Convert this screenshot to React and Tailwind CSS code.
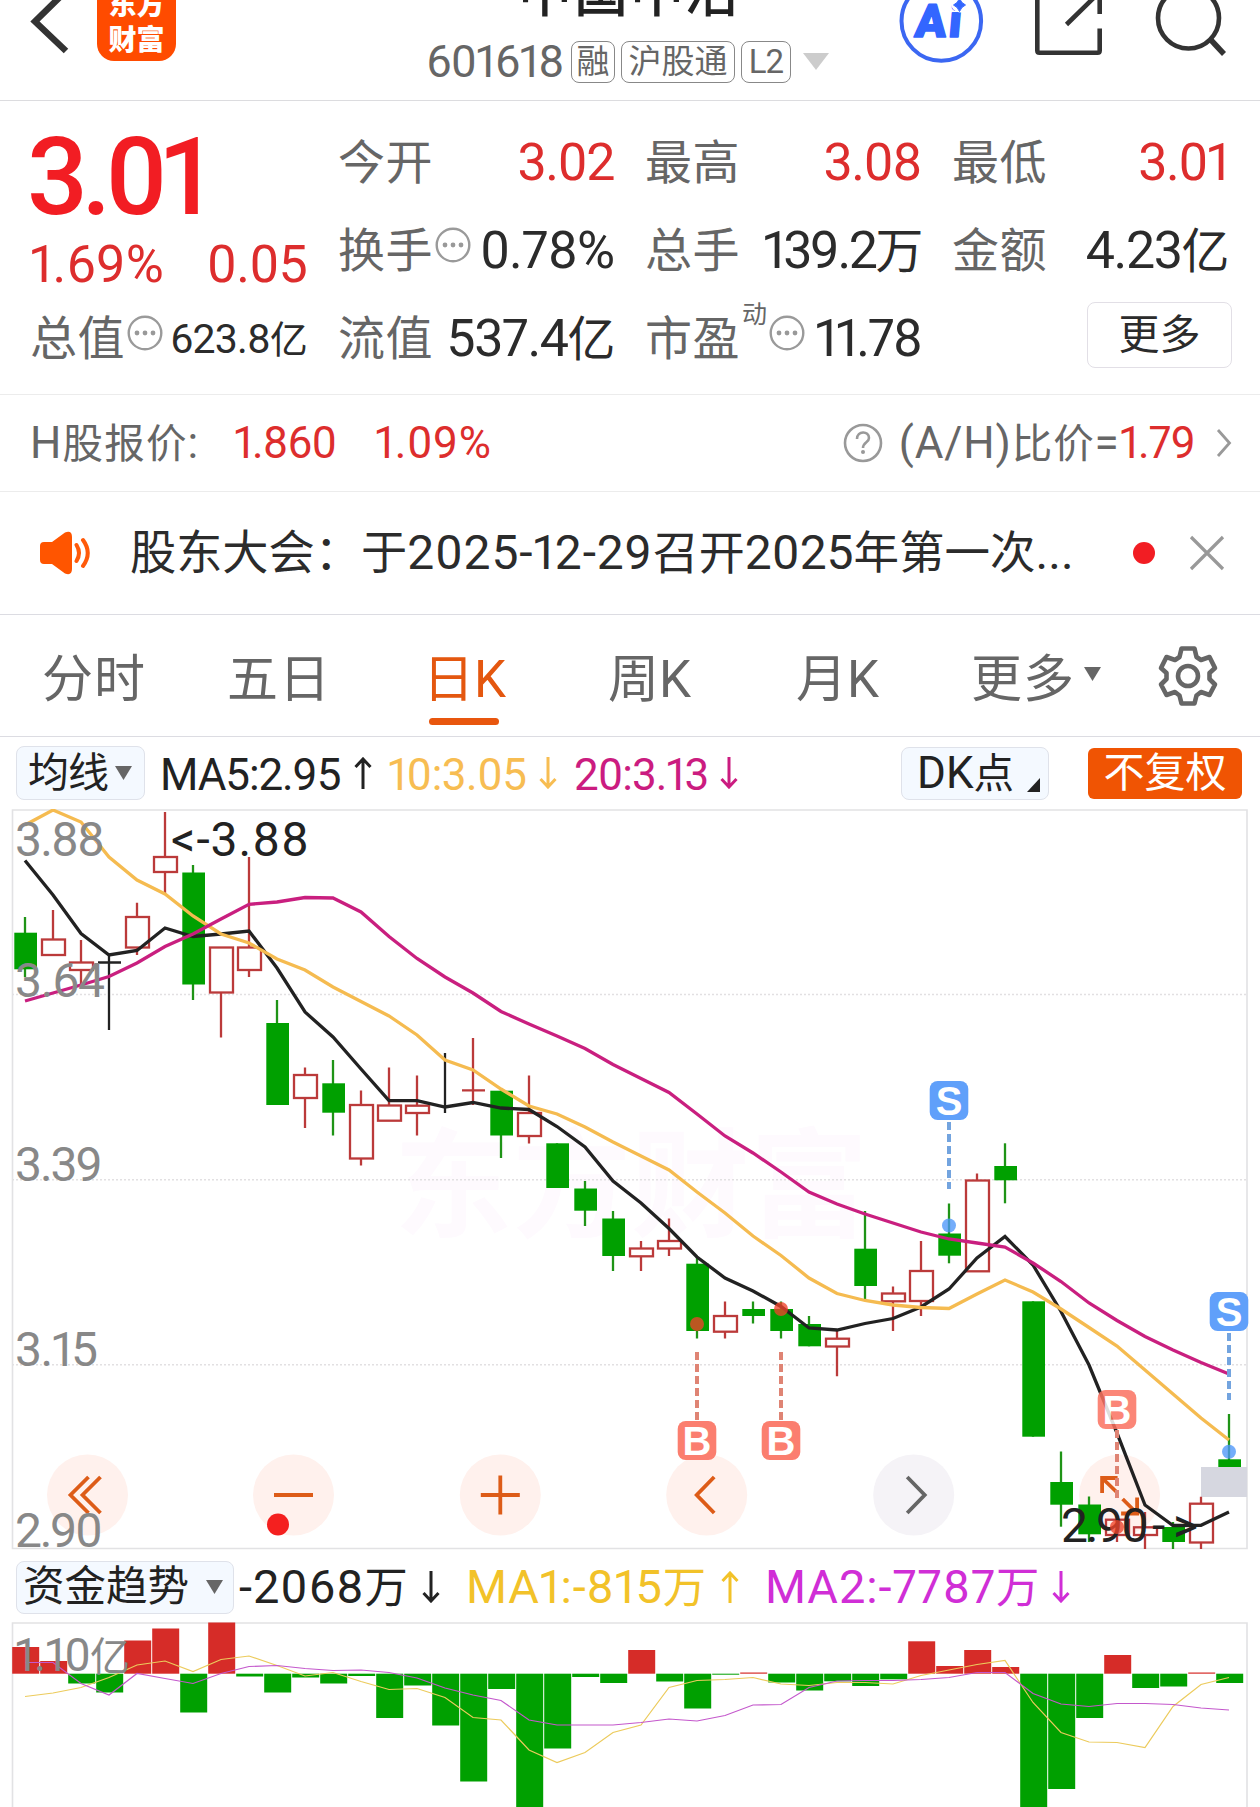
import React from "react";

/* ---------- data ---------- */

const STEP = 28;
const X0 = 25;

// kind, high, body top, body bottom, low
const candles = [
  ["g", 917, 932.7, 969.3, 977], ["r", 910, 939.5, 955, 955], ["r", 940, 962.5, 970, 985],
  ["d", 955, 962.5, 962.5, 1030], ["r", 902.7, 917, 947.5, 955], ["r", 812, 857, 872, 893.5],
  ["g", 865, 872.5, 984.5, 1000], ["r", 947, 947.5, 992.5, 1037.5], ["r", 857, 947.5, 970, 977],
  ["g", 1000, 1023, 1105, 1105], ["r", 1067.5, 1075, 1098, 1128], ["g", 1060, 1083.3, 1112.7, 1135.5],
  ["r", 1090.5, 1105, 1158.5, 1165.5], ["r", 1067.5, 1105.5, 1120.7, 1120.7], ["r", 1075.5, 1105.7, 1113, 1135.5],
  ["v", 1053, 1105, 1105, 1113], ["x", 1038, 1090.3, 1090.3, 1105], ["g", 1090.5, 1090.7, 1135.5, 1158],
  ["r", 1075.5, 1113, 1136, 1143.5], ["g", 1143.3, 1143.3, 1188, 1188], ["g", 1181, 1188.5, 1210.7, 1226],
  ["g", 1211, 1218.5, 1256, 1271], ["r", 1241, 1248.5, 1256.3, 1271], ["r", 1218.5, 1241, 1248.5, 1256],
  ["g", 1256, 1263.7, 1331, 1338.5], ["r", 1301.5, 1316, 1331.7, 1338.5], ["g", 1301.5, 1309, 1316, 1323.5],
  ["g", 1301.5, 1309, 1331, 1338.5], ["g", 1316, 1324, 1346.3, 1346.3], ["r", 1330, 1338.7, 1346.5, 1376.3],
  ["g", 1211, 1248.7, 1286, 1300], ["r", 1286.5, 1293.5, 1301.3, 1331], ["r", 1241, 1271, 1301, 1316],
  ["g", 1203.5, 1233.5, 1255.7, 1263.3], ["r", 1173.5, 1180.5, 1271.3, 1271.3], ["g", 1143.3, 1166, 1180.3, 1203.3],
  ["g", 1301.3, 1301.3, 1436.7, 1436.7], ["g", 1451.5, 1482, 1504.7, 1526.7], ["g", 1496.5, 1504.5, 1534.3, 1542],
  ["r", 1515, 1519.7, 1535, 1542], ["r", 1512, 1527.3, 1535, 1549], ["g", 1522, 1527, 1542, 1549],
  ["r", 1496.7, 1503.7, 1542.5, 1549], ["g", 1414, 1459.3, 1467, 1467],
];

const ma5 = [860.5, 895, 933.5, 955, 950.5, 928, 936.5, 934, 931, 968, 1012, 1037, 1069, 1100.7, 1100.7, 1107, 1102.5, 1108, 1109.5, 1126.5, 1147, 1181, 1203, 1228.5, 1257, 1278, 1291, 1306.5, 1328, 1330, 1323.5, 1318.5, 1307, 1289, 1258, 1236.5, 1265, 1311.5, 1365, 1433, 1505, 1525.5, 1525.3, 1512];
const ma10 = [825, 810, 822, 857, 880, 894, 916, 934, 943, 959, 970, 987, 1001.5, 1016, 1035, 1060, 1070, 1089, 1106, 1114, 1127, 1142, 1156, 1170, 1192, 1213, 1236, 1255.5, 1278, 1293.5, 1300.5, 1305, 1307.5, 1308.5, 1294, 1280, 1292, 1309, 1327.5, 1346, 1370, 1394, 1418, 1440];
const ma20 = [1001, 993, 985, 976.5, 963, 946.5, 934, 919, 904.3, 902, 897.5, 898, 912, 936.5, 958.5, 977, 993, 1011.5, 1024, 1036, 1048.5, 1064.5, 1078.5, 1092.5, 1114, 1136, 1153, 1172, 1192, 1204, 1214, 1223, 1232, 1239, 1243, 1247, 1263, 1281.5, 1303, 1320.5, 1336.5, 1350, 1362.5, 1374];

const flowBase = 1673.7;
const flow = [1647, 1661, 1683.5, 1692.5, 1640.5, 1628.5, 1712.5, 1622.5, 1676.5, 1692.5, 1677.5, 1683.5, 1676, 1718, 1685.5, 1725.5, 1781.5, 1689, 1810, 1748.5, 1677, 1683, 1650, 1681.5, 1708.5, 1674.7, 1672.5, 1682.5, 1690.5, 1681.3, 1686, 1679.3, 1641.3, 1666, 1650, 1667, 1810, 1789, 1718, 1655, 1688, 1686.5, 1672.5, 1683];
const flowMa1 = [1696.5, 1693, 1687.5, 1677.5, 1665, 1661, 1671.5, 1659.5, 1656, 1665.5, 1676, 1672.5, 1681.5, 1689.5, 1688.5, 1697.5, 1717.5, 1720, 1750, 1762.5, 1752.5, 1732.5, 1725, 1687.5, 1680.5, 1679.5, 1677.5, 1684, 1685.5, 1682.5, 1682.5, 1684, 1675.5, 1670, 1664.5, 1660.5, 1702.5, 1732.5, 1742, 1742.5, 1747.5, 1706.5, 1684.5, 1677.5];
const flowMa2 = [1662.5, 1662.5, 1683.5, 1695, 1673.5, 1678.5, 1683.5, 1673.5, 1666.5, 1665.5, 1668.5, 1670.5, 1670, 1672.5, 1678, 1688, 1695, 1700.5, 1720, 1725, 1725, 1725, 1722.5, 1719, 1721, 1715.5, 1705, 1704.5, 1687.5, 1681, 1680.5, 1680.5, 1679.5, 1677.5, 1672.5, 1672.5, 1693.5, 1704, 1706.5, 1703.5, 1703.5, 1704.5, 1708, 1710];

const line = (ys) => ys.map((y, i) => `${X0 + i * STEP},${y}`).join(" ");

/* ---------- small pieces ---------- */

const Han = ({ children }) => <span className="text-[0.92em]">{children}</span>;

const More = () => (
  <svg width="36" height="36" viewBox="0 0 36 36" className="-mt-[10px] ml-[2px] shrink-0">
    <circle cx="18" cy="18" r="16.3" fill="none" stroke="#9a9a9a" strokeWidth="2.4" />
    <circle cx="10" cy="18" r="2.4" fill="#999" />
    <circle cx="18" cy="18" r="2.4" fill="#999" />
    <circle cx="26" cy="18" r="2.4" fill="#999" />
  </svg>
);

const Arrow = ({ down, className }) => (
  <svg width="18" height="32" viewBox="0 0 18 32" className={className} fill="none" stroke="currentColor" strokeWidth="3">
    {down ? <path d="M9 0V30M1.5 22L9 30L16.5 22" /> : <path d="M9 32V2M1.5 10L9 2L16.5 10" />}
  </svg>
);

const Tri = ({ className, w = 17, h = 14 }) => (
  <svg width={w} height={h} viewBox="0 0 17 14" preserveAspectRatio="none" className={className}>
    <path d="M0 0H17L8.5 14Z" fill="currentColor" />
  </svg>
);

const Tag = ({ className, children }) => (
  <span className={`flex h-[42px] items-center justify-center rounded-[8px] border border-[#888] text-[33px] ${className}`}>{children}</span>
);

const Stat = ({ label, icon, children, className }) => (
  <div className="flex h-[88px] items-center justify-between pt-[4px]">
    <div className="-mt-[2px] flex items-center text-[#666]">
      <span className="text-[47px] tracking-[0.5px]">{label}</span>
      {icon}
    </div>
    <span className={className}>{children}</span>
  </div>
);

/* ---------- sections ---------- */

const Header = () => (
  <header className="flex h-[101px] items-start overflow-hidden border-b border-[#dcdcdf]">
    <svg width="97" height="62" viewBox="0 0 97 62" className="shrink-0">
      <path d="M66 -9L35 21.5L66 51" fill="none" stroke="#333" strokeWidth="6.5" />
    </svg>
    <div className="mt-[-18px] flex h-[79px] w-[79px] shrink-0 flex-col items-center justify-center rounded-[17px] bg-[#ff4b00] pt-[3px] text-[28px] font-black leading-[35px] text-white">
      <span>东方</span>
      <span>财富</span>
    </div>
    <div className="ml-[250px] flex w-[406px] shrink-0 flex-col">
      <div className="mt-[-36px] pl-[92px] text-[54px] font-medium leading-[60px] tracking-[2px] text-[#222]">中国中冶</div>
      <div className="mt-[15px] flex items-center text-[#666]">
        <span className="w-[145px] text-[45px] tracking-[-0.9px]">601618</span>
        <Tag className="w-[44px]">融</Tag>
        <Tag className="ml-[6px] w-[114px]">沪股通</Tag>
        <Tag className="ml-[6px] w-[50px] tracking-[-1px]">L2</Tag>
        <Tri w={26} h={17} className="ml-[12px] text-[#ccc]" />
      </div>
    </div>
    <svg width="428" height="68" viewBox="832 0 428 68" className="shrink-0">
      <circle cx="941.3" cy="21" r="39.800" fill="#fff" stroke="#3b67f2" strokeWidth="4" />
      <text x="0" y="0" transform="translate(914 36.5) skewX(-5)" fontFamily="Roboto" fontWeight="900" fontSize="46" fill="#3366ff" stroke="#3366ff" strokeWidth="1.6" strokeLinejoin="round" letterSpacing="2.500">Ai</text>
      <circle cx="960" cy="3.500" r="9" fill="#fff" />
      <path d="M959.500 -1.500Q961.300 3.200 965.500 5Q961.300 6.800 959.500 11.500Q957.700 6.800 953.500 5Q957.700 3.200 959.500 -1.500Z" fill="#3366ff" stroke="#3366ff" />
      <g fill="none" stroke="#333" strokeWidth="4.6">
        <path d="M1037.300 -12V50.500Q1037.300 52.700 1039.500 52.700H1097.500Q1099.700 52.700 1099.700 50.500V28.500" />
        <path d="M1099.700 14V-8L1066.500 24.500" />
        <circle cx="1188.500" cy="18" r="30.500" />
        <path d="M1210 39L1224 54" strokeWidth="5.500" />
      </g>
    </svg>
  </header>
);

const Quote = () => (
  <section className="grid h-[294px] grid-cols-[277px_276px_276px_276px] gap-x-[31px] border-b border-[#ececec] pl-[30px] pt-[16px]">
    <div>
      <div className="-ml-[3px] flex h-[116px] items-center pt-[6px] text-[107px] font-medium leading-[90px] tracking-[-6.3px] text-[#f21d23]">3.01</div>
      <div className="flex h-[60px] items-center justify-between pt-[4px] text-[52px] text-[#dd2d2d]">
        <span>1.69%</span>
        <span className="tracking-[-0.8px]">0.05</span>
      </div>
      <Stat label="总值" icon={<More />} className="text-[41px] tracking-[-0.8px] text-[#2b2b2b]">623.8<Han>亿</Han></Stat>
    </div>
    <div>
      <Stat label="今开" className="text-[52px] tracking-[-1.5px] text-[#dd2d2d]">3.02</Stat>
      <Stat label="换手" icon={<More />} className="text-[52px] tracking-[-1px] text-[#2b2b2b]">0.78%</Stat>
      <Stat label="流值" className="text-[52px] tracking-[-1.4px] text-[#2b2b2b]">537.4<Han>亿</Han></Stat>
    </div>
    <div>
      <Stat label="最高" className="text-[52px] tracking-[-1.5px] text-[#dd2d2d]">3.08</Stat>
      <Stat label="总手" className="text-[52px] tracking-[-2.4px] text-[#2b2b2b]">139.2<Han>万</Han></Stat>
      <Stat
        label="市盈"
        icon={<><span className="ml-[2px] mt-[-48px] text-[25px]">动</span><More /></>}
        className="text-[52px] tracking-[-2px] text-[#2b2b2b]"
      >
        11.78
      </Stat>
    </div>
    <div>
      <Stat label="最低" className="text-[52px] tracking-[-1.5px] text-[#dd2d2d]">3.01</Stat>
      <Stat label="金额" className="text-[52px] tracking-[-1.4px] text-[#2b2b2b]">4.23<Han>亿</Han></Stat>
      <div className="ml-[135px] mt-[9px] flex h-[66px] w-[145px] items-center justify-center rounded-[8px] border border-[#e2dfe6] text-[41px] text-[#2b2b2b]">更多</div>
    </div>
  </section>
);

const HShare = () => (
  <section className="flex h-[97px] items-center border-b border-[#ececec] pl-[30px] text-[44px] text-[#666]">
    <span className="w-[204px] tracking-[1.2px]">H<Han>股报价</Han>:</span>
    <span className="w-[141px] tracking-[-1px] text-[#dd2d2d]">1.860</span>
    <span className="tracking-[0.6px] text-[#dd2d2d]">1.09%</span>
    <div className="ml-auto flex items-center pr-[28px]">
      <svg width="40" height="40" viewBox="0 0 40 40" className="mr-[16px]">
        <circle cx="20" cy="20" r="18" fill="none" stroke="#999" strokeWidth="2.6" />
        <path d="M14 16C14 7.500 26 7.500 26 15C26 19.500 20 19 20 25" fill="none" stroke="#999" strokeWidth="2.6" />
        <circle cx="20" cy="29" r="2" fill="#999" />
      </svg>
      <span className="tracking-[0.9px]">(A/H)<Han>比价</Han>=</span>
      <span className="tracking-[-0.8px] text-[#dd2d2d]">1.79</span>
      <svg width="16" height="28" viewBox="0 0 16 28" className="ml-[21px]" fill="none" stroke="#999" strokeWidth="2.800">
        <path d="M2 1L13.500 14L2 27" />
      </svg>
    </div>
  </section>
);

const Notice = () => (
  <section className="flex h-[123px] items-center border-b border-[#dcdce2] pl-[39px]">
    <svg width="54" height="44" viewBox="0 0 54 44" className="shrink-0">
      <path d="M5 11H13L26 1.500Q33 -1 33 6V38Q33 45 26 42.500L13 33H5Q1 33 1 29V15Q1 11 5 11Z" fill="#ff5500" />
      <path d="M37.500 14Q42.500 22 37.500 30M44 9Q53.500 22 44 35" fill="none" stroke="#ff5a0a" strokeWidth="4" strokeLinecap="round" />
    </svg>
    <span className="ml-[37px] w-[1003px] text-[48px] text-[#2b2b2b]">
      <span className="text-[46.200px]">股东大会：于</span>
      <span className="tracking-[0.8px]">2025-12-29</span>
      <span className="text-[46px]">召开</span>
      2025
      <span className="text-[45.500px]">年第一次</span>...
    </span>
    <span className="h-[22px] w-[22px] rounded-full bg-[#f21d23]" />
    <svg width="36" height="36" viewBox="0 0 36 36" className="ml-[34px]" fill="none" stroke="#999" strokeWidth="3.200">
      <path d="M2 2L34 34M34 2L2 34" />
    </svg>
  </section>
);

const Gear = () => (
  <svg width="60" height="62" viewBox="0 0 60 62" fill="none" stroke="#666" strokeWidth="4.600" strokeLinejoin="round">
    <path d="M23.500 3.500H36.500L38.500 12L43 15L51.500 12L57 23L51.500 28V34L57 39.500L51.500 50L43 47L38.500 50.500L36.500 58.500H23.500L21.500 50.500L17 47L8.500 50L3 39.500L8.500 34V28L3 23L8.500 12L17 15L21.500 12Z" />
    <circle cx="30" cy="31" r="10" />
  </svg>
);

const Tabs = () => (
  <nav className="flex h-[122px] items-center border-b border-[#dcdce2] pl-[42px] text-[51px] text-[#666]">
    <span className="w-[185px] pt-[8px] tracking-[1px]">分时</span>
    <span className="w-[196px] pt-[8px] tracking-[1px]">五日</span>
    <span className="relative w-[185px] pt-[8px] text-[#e4570f]">
      日K
      <span className="absolute -bottom-[20px] left-[6px] h-[7px] w-[70px] rounded-full bg-[#e8560e]" />
    </span>
    <span className="w-[188px] pt-[8px]">周K</span>
    <span className="w-[175px] pt-[8px]">月K</span>
    <span className="pt-[8px] tracking-[1px]">更多</span>
    <Tri className="ml-[9px] mt-[-4px]" />
    <div className="ml-[57px]"><Gear /></div>
  </nav>
);

const Indicators = () => (
  <section className="flex h-[72px] items-center pl-[16px] text-[44px]">
    <div className="flex h-[54px] w-[129px] items-center rounded-[8px] border border-[#dfe2ea] bg-[#f4f9ff] pl-[11px] text-[41px] tracking-[-1px] text-[#222]">
      均线<Tri className="ml-[7px] text-[#666]" />
    </div>
    <span className="ml-[15px] w-[194px] pt-[3px] tracking-[-1.1px] text-[#222]">MA5:2.95</span>
    <Arrow className="text-[#222]" />
    <span className="ml-[16px] w-[151px] pt-[3px] tracking-[-0.5px] text-[#f7bd52]">10:3.05</span>
    <Arrow down className="text-[#f7bd52]" />
    <span className="ml-[17px] w-[146px] pt-[3px] tracking-[-1px] text-[#cb1c80]">20:3.13</span>
    <Arrow down className="text-[#cb1c80]" />
    <div className="ml-[163px] flex h-[53px] w-[148px] items-center rounded-[8px] border border-[#dfe2ea] bg-[#f4f9ff] pl-[15px] text-[#222]">
      <span>DK<Han>点</Han></span>
      <svg width="13" height="14" viewBox="0 0 13 14" className="ml-[13px] mt-[24px]"><path d="M13 0V14H0Z" fill="#222" /></svg>
    </div>
    <div className="ml-[39px] flex h-[51px] w-[154px] items-center justify-center rounded-[6px] bg-[#f05403] text-[41px] text-white">不复权</div>
  </section>
);

const Candle = ({ i, c }) => {
  const [kind, high, top, bottom, low] = c;
  const x = X0 + i * STEP;
  if (kind === "g")
    return (
      <g>
        <path d={`M${x} ${high}V${low}`} stroke="#1f9416" strokeWidth="2.300" />
        <rect x={x - 10.7} y={top} width="22.7" height={bottom - top} fill="#00a000" />
      </g>
    );
  if (kind === "r")
    return (
      <g stroke="#bb3a3a" strokeWidth="2.300" fill="none">
        <path d={`M${x} ${high}V${top}M${x} ${bottom}V${low}`} />
        <rect x={x - 11} y={top} width="23" height={bottom - top} />
      </g>
    );
  if (kind === "v") return <path d={`M${x} ${high}V${low}`} stroke="#222" strokeWidth="2.300" />;
  const color = kind === "d" ? "#222" : "#bb3a3a";
  return <path d={`M${x} ${high}V${low}M${x - 11} ${top}H${x + 12}`} stroke={color} strokeWidth="2.300" />;
};

const Marker = ({ x, y, letter, from, to, dot, color, dash, opacity = 1 }) => (
  <g>
    <path d={`M${x} ${from}V${to}`} stroke={dash} strokeWidth="4" strokeDasharray="8 4" />
    <circle cx={x} cy={dot} r="7" fill={letter === "B" ? "#f0432a" : "#4d96f8"} fillOpacity="0.78" />
    <g opacity={opacity}>
      <rect x={x - 19.3} y={y} width="38.600" height="39" rx="8" fill={color} />
      <text x={x} y={y + 34} textAnchor="middle" fontFamily="Liberation Sans" fontWeight="700" fontSize="40" fill="#fff">{letter}</text>
    </g>
  </g>
);

const Round = ({ x, fill = "#fff1ed", stroke = "#dd5c18", children }) => (
  <g transform={`translate(${x} 1495)`} fill="none" stroke={stroke} strokeWidth="3.800">
    <circle r="40.500" fill={fill} stroke="none" />
    {children}
  </g>
);

const Scale = ({ y, w = 90, children }) => (
  <text x="15" y={y} fontSize="48" fill="#888" textLength={w}>{children}</text>
);

const KChart = () => (
  <svg width="1260" height="741" viewBox="0 809 1260 741" className="block">
    <text x="394" y="1228" fontSize="118" fontWeight="700" fill="#fefafe" textLength="474">东方财富</text>
    <g stroke="#e2e0e2" strokeWidth="1.500" strokeDasharray="2 2">
      <path d="M12 994.500H1247M12 1179.700H1247M12 1364.700H1247" />
    </g>
    <path d="M12.500 810H1247V1548.500H12.500Z" fill="none" stroke="#e2e2e4" strokeWidth="1.600" />
    <Round x={87.5}><path d="M1 -18L-17 0L1 18M13 -18L-5 0L13 18" /></Round>
    <Round x={293.5}><path d="M-19.500 0H19.500" /></Round>
    <Round x={500.3}><path d="M-19.500 0H19.500M0 -19.500V19.500" /></Round>
    <Round x={706.7}><path d="M7.500 -18L-10 0L7.500 18" /></Round>
    <Round x={913.7} fill="#f5f3f7" stroke="#666"><path d="M-6.500 -18L11 0L-6.500 18" /></Round>
    <Round x={1119.6}><path d="M-2 -17H-17.500V-2M-17.500 -17L-2 -2M1.500 18.500H17.500V2.500M17.500 18.500L3 4" /></Round>
    <circle cx="278" cy="1524.500" r="11" fill="#f4201f" />
    <rect x="1201" y="1467" width="46" height="30" fill="#d6d7e0" />
    {candles.map((c, i) => <Candle key={i} i={i} c={c} />)}
    <g fill="none" strokeWidth="3.300">
      <polyline points={line(ma5)} stroke="#222" />
      <polyline points={line(ma10)} stroke="#f5bb50" />
      <polyline points={line(ma20)} stroke="#c91f7f" />
    </g>
    <Scale y={855.500}>3.88</Scale>
    <Scale y={997}>3.64</Scale>
    <Scale y={1181} w={88}>3.39</Scale>
    <Scale y={1366} w={83}>3.15</Scale>
    <Scale y={1547} w={88}>2.90</Scale>
    <text x="171" y="855.500" fontSize="48" fill="#222" textLength="138">{"<-3.88"}</text>
    <text x="1061" y="1542" fontSize="48" fill="#222" textLength="88">2.90</text>
    <text x="1152" y="1542" fontSize="48" fill="#222" textLength="46">{"->"}</text>
    <Marker x={949} y={1081} letter="S" from={1122} to={1189} dot={1225.500} color="#60a0fa" dash="#73a4df" />
    <Marker x={1229} y={1292} letter="S" from={1333} to={1400} dot={1451.700} color="#60a0fa" dash="#73a4df" />
    <Marker x={697} y={1421} letter="B" from={1352} to={1420} dot={1324} color="#fb7e6f" dash="#df8474" />
    <Marker x={781} y={1421} letter="B" from={1352} to={1420} dot={1309} color="#fb7e6f" dash="#df8474" />
    <Marker x={1117} y={1390} letter="B" from={1430} to={1498} dot={1527} color="#fb7160" dash="#df8474" opacity={0.85} />
  </svg>
);

const FlowHeader = () => (
  <section className="flex h-[72px] items-center pl-[16px] pt-[2px] text-[47px]">
    <div className="flex h-[53px] w-[218px] items-center rounded-[8px] border border-[#dfe2ea] bg-[#f4f9ff] pl-[6px] text-[41.500px] text-[#222]">
      资金趋势<Tri className="ml-[17px] text-[#666]" />
    </div>
    <span className="ml-[5px] w-[183px] tracking-[0.9px] text-[#222]">-2068<Han>万</Han></span>
    <Arrow down className="text-[#222]" />
    <span className="ml-[26px] w-[255px] tracking-[0.7px] text-[#f2c229]">MA1:-815<Han>万</Han></span>
    <Arrow className="text-[#f2c229]" />
    <span className="ml-[26px] w-[287px] tracking-[0.9px] text-[#d02ed6]">MA2:-7787<Han>万</Han></span>
    <Arrow down className="text-[#d02ed6]" />
  </section>
);

const FlowChart = () => (
  <svg width="1260" height="185" viewBox="0 1622 1260 185" className="block">
    <path d="M12.500 1810V1623H1247V1810" fill="none" stroke="#e2e2e4" strokeWidth="1.600" />
    {flow.map((y, i) => (
      <rect key={i} x={12.200 + i * STEP} width="27" y={Math.min(y, flowBase)} height={Math.abs(y - flowBase)} fill={y < flowBase ? "#d62c28" : "#00a000"} />
    ))}
    <g fill="none" strokeWidth="1.200">
      <polyline points={line(flowMa1)} stroke="#eccb5c" />
      <polyline points={line(flowMa2)} stroke="#c458cc" />
    </g>
    <text x="15" y="1671" fontSize="46" fill="#888" textLength="115">
      1.10<tspan fontSize="40">亿</tspan>
    </text>
  </svg>
);

export default function App() {
  return (
    <main className="h-[1807px] w-[1260px] overflow-hidden whitespace-nowrap bg-white font-[Roboto,'Noto_Sans_CJK_SC',sans-serif] leading-none proportional-nums">
      <Header />
      <Quote />
      <HShare />
      <Notice />
      <Tabs />
      <Indicators />
      <KChart />
      <FlowHeader />
      <FlowChart />
    </main>
  );
}
